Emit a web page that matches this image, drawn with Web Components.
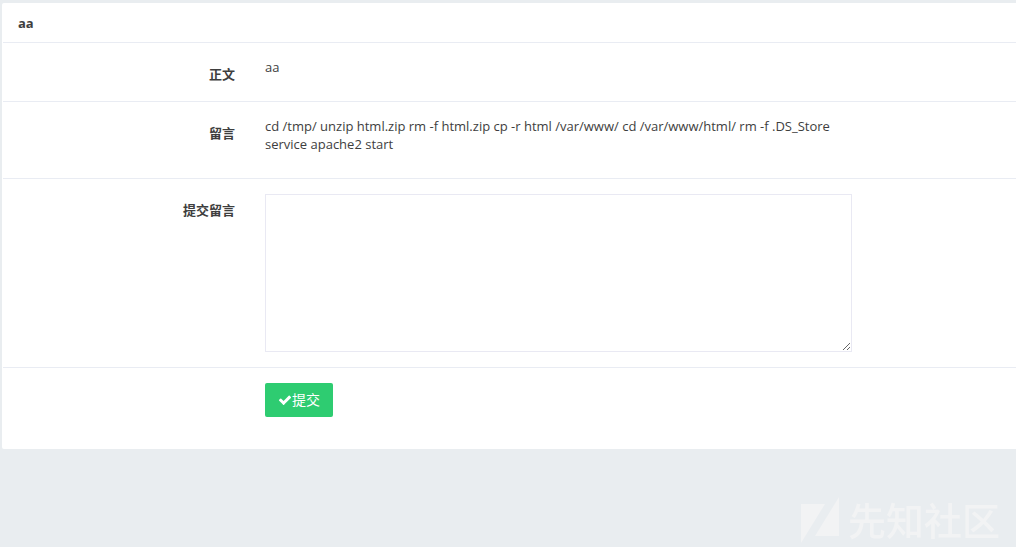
<!DOCTYPE html>
<html lang="zh-CN">
<head>
<meta charset="utf-8">
<title>aa</title>
<style>
html { min-height: 100%; background: #e9edf0; }
body {
  margin: 0;
  padding: 3px 0 0 2px;
  color: #3e3e3e;
  font: 13px/18px "Open Sans", "Noto Sans CJK SC", sans-serif;
}
</style>
</head>
<body>
<message-panel>
  <span slot="title">aa</span>
  <form-row label="正文"><p-text>aa</p-text></form-row>
  <form-row label="留言"><p-text>cd /tmp/ unzip html.zip rm -f html.zip cp -r html /var/www/ cd /var/www/html/ rm -f .DS_Store service apache2 start</p-text></form-row>
  <comment-field label="提交留言"></comment-field>
  <form-row last><submit-button>提交</submit-button></form-row>
</message-panel>
<site-mark>先知社区</site-mark>

<script>
const define = (name, html, setup) => {
  customElements.define(name, class extends HTMLElement {
    constructor() {
      super();
      this.attachShadow({ mode: "open" }).innerHTML = html;
    }
    connectedCallback() {
      if (setup) setup(this, this.shadowRoot);
    }
  });
};

const rowStyles = `
  :host {
    display: grid;
    grid-template-columns: 247fr 617fr 149fr;
    border-bottom: 1px solid #e9ecf3;
  }
  :host([last]) { border-bottom: 0; padding-bottom: 17px; }
  .label { padding: 22px 15px 0 0; text-align: right; font-weight: 700; }
  .content { padding: 15px; min-width: 0; }
`;

define("message-panel", `
  <style>
    :host { display: block; background: #fff; border-radius: 2px 0 0 2px; padding-left: 1px; }
    h1 { margin: 0; padding: 11px 15px 10px; border-bottom: 1px solid #e9ecf3; font-size: 13px; line-height: 18px; font-weight: 700; }
  </style>
  <h1><slot name="title"></slot></h1>
  <slot></slot>`);

define("form-row", `
  <style>${rowStyles}</style>
  <div class="label"></div>
  <div class="content"><slot></slot></div>`,
  (host, root) => { root.querySelector(".label").textContent = host.getAttribute("label") || ""; });

define("p-text", `
  <style>:host { display: block; margin-bottom: 10px; }</style>
  <slot></slot>`);

define("comment-field", `
  <style>
    ${rowStyles}
    textarea {
      display: block; box-sizing: border-box; width: 100%; height: 158px; margin: 0;
      padding: 6px 12px; border: 1px solid #e9e9f3; border-radius: 0; background: #fff;
      color: inherit; font: inherit; resize: vertical; outline: 0;
    }
  </style>
  <label class="label" for="comment"></label>
  <div class="content"><textarea id="comment"></textarea></div>`,
  (host, root) => { root.querySelector("label").textContent = host.getAttribute("label"); });

define("submit-button", `
  <style>
    :host { display: block; }
    button {
      display: flex; align-items: center; height: 34px; margin: 0; padding: 0 13px;
      border: 0; border-radius: 2px; background: #2ecc71; color: #fff;
      font: 14px/20px "Open Sans", "Noto Sans CJK SC", sans-serif; cursor: pointer;
    }
    svg { width: 14px; height: 14px; fill: currentColor; }
  </style>
  <button type="submit"><svg viewBox="0 0 1792 1792" aria-hidden="true"><path d="M1671 566q0 40-28 68l-724 724-136 136q-28 28-68 28t-68-28l-136-136-362-362q-28-28-28-68t28-68l136-136q28-28 68-28t68 28l294 295 656-657q28-28 68-28t68 28l136 136q28 28 28 68z"/></svg><slot></slot></button>`);

define("site-mark", `
  <style>
    :host {
      position: fixed; right: 16px; bottom: 3px; display: flex; align-items: flex-start; gap: 9px;
      color: #f2f3f4; font: 500 38px/46px "Noto Sans CJK SC", sans-serif; pointer-events: none;
    }
    svg { width: 39px; height: 48px; fill: currentColor; }
  </style>
  <svg viewBox="0 0 39 48" aria-hidden="true"><path d="M1 8H25L1 47ZM39 1V40H15Z"/></svg>
  <slot></slot>`);
</script>
</body>
</html>
